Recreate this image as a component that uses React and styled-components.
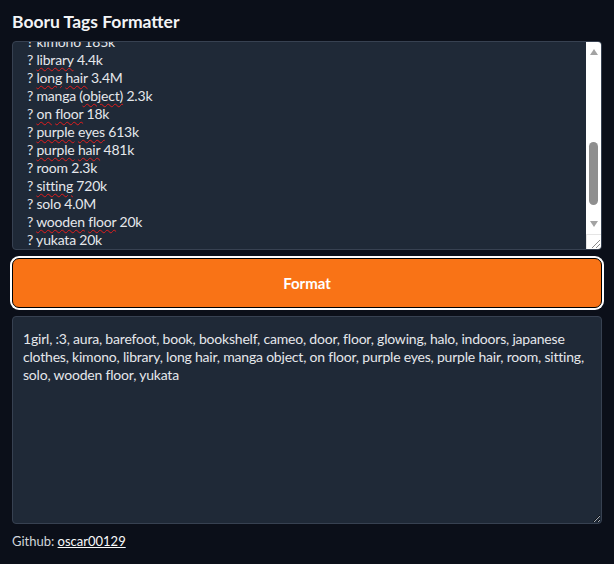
import React, { useEffect, useRef } from 'react';
import styled, { createGlobalStyle } from 'styled-components';

const GlobalStyle = createGlobalStyle`
    html, body {
        margin: 0;
        background: #0b0f19;
        font-family: Lato, "Noto Sans", sans-serif;
        color: #e5e7eb;
    }
`

const Page = styled.div`
    padding: 12px 12px 0 12px;
    display: flex;
    flex-direction: column;
    gap: 8px;
`

const Title = styled.h1`
    margin: -1px 0 1px 0;
    font-size: 17.5px;
    font-weight: 700;
    color: #f3f4f6;
    line-height: 21px;
`

const TagsFrame = styled.div`
    box-sizing: border-box;
    height: 209px;
    display: flex;
    background: #1f2937;
    border: 1px solid #374151;
    border-radius: 4px;
    overflow: hidden;
`

const TagsScroll = styled.div`
    flex: 1;
    overflow: hidden;
    padding: 0 12px 0 14px;
    font-size: 14px;
    line-height: 18px;
    letter-spacing: -0.2px;
    color: #e5e7eb;
`

const ScrollBar = styled.div`
    width: 15px;
    display: flex;
    flex-direction: column;
    background: #ffffff;
`

const ArrowButton = styled.div`
    height: 20px;
    display: flex;
    align-items: center;
    justify-content: center;
    margin-top: ${props => props.down ? '1px' : '0'};
`

const Track = styled.div`
    flex: 1;
    display: flex;
    flex-direction: column;
    justify-content: flex-end;
    align-items: center;
    padding-bottom: 8px;
`

const Thumb = styled.div`
    width: 9px;
    height: 63px;
    border-radius: 5px;
    background: #8f8f8f;
`

const Corner = styled.div`
    height: 15px;
    box-sizing: border-box;
    border-top: 1px solid #e5e5e5;
    border-left: 1px solid #e5e5e5;
    display: flex;
    align-items: flex-end;
    justify-content: flex-end;
`

const TagLine = styled.div`
    white-space: nowrap;
`

const Typo = styled.span`
    text-decoration: underline wavy #e11d1d;
    text-decoration-thickness: 1px;
    text-underline-offset: 2px;
`

const FormatButton = styled.button`
    height: 50px;
    width: 100%;
    margin: 0;
    background: #f97316;
    border: 1px solid #000;
    box-shadow: 0 0 0 2px #ffffff;
    border-radius: 7px;
    color: #fff;
    font-family: inherit;
    font-size: 15px;
    font-weight: 700;
    cursor: pointer;
`

const Output = styled.textarea`
    box-sizing: border-box;
    display: block;
    width: 100%;
    height: 208px;
    margin: 0;
    background: #1f2937;
    border: 1px solid #374151;
    border-radius: 4px;
    padding: 13px 10px;
    font-family: inherit;
    font-size: 14px;
    line-height: 18px;
    letter-spacing: -0.2px;
    color: #e5e7eb;
    resize: vertical;
    outline: none;
`

const Footer = styled.p`
    margin: 0;
    font-size: 13px;
    line-height: 18px;
    color: #d1d5db;

    a {
        color: #f9fafb;
        text-decoration: underline;
    }
`

const tags = [
    ['1girl', '6.2M'],
    [':3', '98k'],
    ['aura', '12k'],
    ['barefoot', '540k'],
    ['book', '310k'],
    ['bookshelf', '62k'],
    ['cameo', '5.1k'],
    ['door', '48k'],
    ['floor', '30k'],
    ['glowing', '190k'],
    ['halo', '210k'],
    ['indoors', '1.1M'],
    ['japanese clothes', '620k'],
    ['kimono', '185k'],
    [[<Typo key="a">library</Typo>], '4.4k'],
    [[<Typo key="a">long</Typo>, ' ', <Typo key="b">hair</Typo>], '3.4M'],
    [['manga (', <Typo key="a">object)</Typo>], '2.3k'],
    [[<Typo key="a">on</Typo>, ' ', <Typo key="b">floor</Typo>], '18k'],
    [[<Typo key="a">purple</Typo>, ' ', <Typo key="b">eyes</Typo>], '613k'],
    [[<Typo key="a">purple</Typo>, ' ', <Typo key="b">hair</Typo>], '481k'],
    ['room', '2.3k'],
    [[<Typo key="a">sitting</Typo>], '720k'],
    ['solo', '4.0M'],
    [[<Typo key="a">wooden</Typo>, ' ', <Typo key="b">floor</Typo>], '20k'],
    ['yukata', '20k'],
]

const result = '1girl, :3, aura, barefoot, book, bookshelf, cameo, door, floor, glowing, halo, indoors, japanese clothes, kimono, library, long hair, manga object, on floor, purple eyes, purple hair, room, sitting, solo, wooden floor, yukata'

const App = () => {
    const boxRef = useRef(null)

    useEffect(() => {
        if (boxRef.current) {
            boxRef.current.scrollTop = boxRef.current.scrollHeight
        }
    }, [])

    return (
        <>
            <GlobalStyle />
            <Page>
                <Title>Booru Tags Formatter</Title>
                <TagsFrame>
                    <TagsScroll ref={boxRef}>
                        {tags.map(([name, count], i) => (
                            <TagLine key={i}>? {name} {count}</TagLine>
                        ))}
                    </TagsScroll>
                    <ScrollBar>
                        <ArrowButton>
                            <svg width="8" height="6" viewBox="0 0 8 6"><polygon points="0,6 8,6 4,0" fill="#a3a3a3" /></svg>
                        </ArrowButton>
                        <Track>
                            <Thumb />
                        </Track>
                        <ArrowButton down>
                            <svg width="8" height="6" viewBox="0 0 8 6"><polygon points="0,0 8,0 4,6" fill="#a3a3a3" /></svg>
                        </ArrowButton>
                        <Corner>
                            <svg width="12" height="12" viewBox="0 0 12 12">
                                <line x1="11" y1="3" x2="3" y2="11" stroke="#8a8a8a" strokeWidth="1" />
                                <line x1="11" y1="7" x2="7" y2="11" stroke="#8a8a8a" strokeWidth="1" />
                            </svg>
                        </Corner>
                    </ScrollBar>
                </TagsFrame>
                <FormatButton>Format</FormatButton>
                <Output readOnly value={result} />
                <Footer>
                    Github: <a href="#">oscar00129</a>
                </Footer>
            </Page>
        </>
    );
};

export default App;
